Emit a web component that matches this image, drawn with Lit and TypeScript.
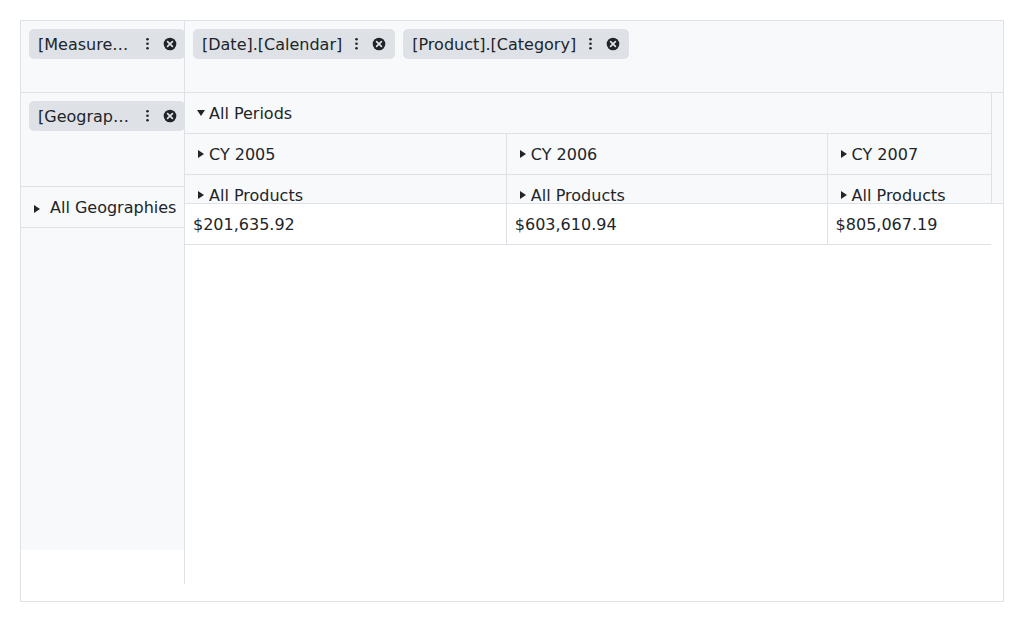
import { LitElement, html, css } from "lit";
import { customElement, property } from "lit/decorators.js";

@customElement("field-chip")
class FieldChip extends LitElement {
  @property() label = "";

  static styles = css`
    :host {
      display: flex;
      flex: none;
      box-sizing: border-box;
      height: 30px;
      align-items: center;
      padding: 0 9px;
      border-radius: 5px;
      background: #dee2e6;
      min-width: 0;
    }
    .label {
      flex: 1 1 auto;
      min-width: 0;
      padding-top: 2px;
      overflow: hidden;
      text-overflow: ellipsis;
      white-space: nowrap;
    }
    svg {
      flex: none;
      display: block;
      fill: #212529;
    }
    .dots {
      margin-left: 8px;
    }
    .close {
      margin-left: 8px;
    }
    .cross {
      stroke: #dee2e6;
      stroke-width: 1.7;
      stroke-linecap: round;
    }
  `;

  render() {
    return html`
      <span class="label">${this.label}</span>
      <svg class="dots" width="14" height="14" viewBox="0 0 14 14">
        <circle cx="6.5" cy="2.3" r="1.3" />
        <circle cx="6.5" cy="6.8" r="1.3" />
        <circle cx="6.5" cy="11.3" r="1.3" />
      </svg>
      <svg class="close" width="14" height="14" viewBox="0 0 14 14">
        <circle cx="7" cy="7" r="6.3" />
        <path class="cross" d="M4.6 4.6 9.4 9.4M9.4 4.6 4.6 9.4" />
      </svg>
    `;
  }
}

@customElement("app-root")
class AppRoot extends LitElement {
  static styles = css`
    :host {
      display: block;
      box-sizing: border-box;
      height: 622px;
      padding: 20px;
      font: 16px/24px "DejaVu Sans", sans-serif;
      color: #212529;
      background: #fff;
    }
    .pivot {
      box-sizing: border-box;
      width: 984px;
      height: 582px;
      border: 1px solid #dee2e6;
      display: grid;
      grid-template-columns: 164px 1fr;
      grid-template-rows: 563px;
    }
    .left {
      box-sizing: border-box;
      border-right: 1px solid #dee2e6;
      overflow: hidden;
    }
    .right {
      min-width: 0;
    }
    .zone {
      box-sizing: border-box;
      height: 72px;
      padding: 8px;
      display: flex;
      align-items: flex-start;
      gap: 8px;
      background: #f8f9fa;
      border-bottom: 1px solid #dee2e6;
    }
    .zone.rows {
      height: 94px;
    }
    .left field-chip {
      width: 156px;
      padding-right: 8px;
    }
    .members {
      height: 363px;
      background: #f8f9fa;
    }
    .member {
      box-sizing: border-box;
      height: 41px;
      padding: 0 8px;
      display: flex;
      align-items: center;
      gap: 5px;
      white-space: nowrap;
      border-bottom: 1px solid #dee2e6;
    }
    .text {
      padding-top: 2px;
    }
    .arrow {
      flex: none;
      display: block;
      fill: #212529;
    }
    .member .arrow {
      margin-top: 3px;
    }
    .headers {
      box-sizing: border-box;
      height: 111px;
      overflow: hidden;
      background: #f8f9fa;
      border-bottom: 1px solid #dee2e6;
    }
    .header-grid {
      box-sizing: border-box;
      width: 807px;
      height: 110px;
      border-right: 1px solid #dee2e6;
      overflow: hidden;
    }
    .line {
      display: grid;
      grid-template-columns: 321.8px 320.8px 163.4px;
    }
    .line.single {
      grid-template-columns: 806px;
    }
    .cell {
      box-sizing: border-box;
      height: 41px;
      padding: 0 8px;
      display: flex;
      align-items: center;
      border-right: 1px solid #dee2e6;
      border-bottom: 1px solid #dee2e6;
      white-space: nowrap;
    }
    .cell:last-child {
      border-right: none;
    }
    .values {
      width: 806px;
    }
  `;

  private years = ["CY 2005", "CY 2006", "CY 2007"];
  private totals = ["$201,635.92", "$603,610.94", "$805,067.19"];

  private collapsed() {
    return html`<svg class="arrow" width="16" height="16" viewBox="0 0 16 16">
      <path d="M5 4 11 8 5 12Z" />
    </svg>`;
  }

  private expanded() {
    return html`<svg class="arrow" width="16" height="16" viewBox="0 0 16 16">
      <path d="M4 5H12L8 11Z" />
    </svg>`;
  }

  private text(value: string) {
    return html`<span class="text">${value}</span>`;
  }

  render() {
    return html`
      <div class="pivot">
        <div class="left">
          <div class="zone"><field-chip label="[Measures].[Amount]"></field-chip></div>
          <div class="zone rows"><field-chip label="[Geography].[Geography]"></field-chip></div>
          <div class="members">
            <div class="member">${this.collapsed()}${this.text("All Geographies")}</div>
          </div>
        </div>
        <div class="right">
          <div class="zone">
            <field-chip label="[Date].[Calendar]"></field-chip>
            <field-chip label="[Product].[Category]"></field-chip>
          </div>
          <div class="headers">
            <div class="header-grid">
              <div class="line single">
                <div class="cell">${this.expanded()}${this.text("All Periods")}</div>
              </div>
              <div class="line">
                ${this.years.map((y) => html`<div class="cell">${this.collapsed()}${this.text(y)}</div>`)}
              </div>
              <div class="line">
                ${this.years.map(
                  () => html`<div class="cell">${this.collapsed()}${this.text("All Products")}</div>`
                )}
              </div>
            </div>
          </div>
          <div class="line values">
            ${this.totals.map((t) => html`<div class="cell">${this.text(t)}</div>`)}
          </div>
        </div>
      </div>
    `;
  }
}
